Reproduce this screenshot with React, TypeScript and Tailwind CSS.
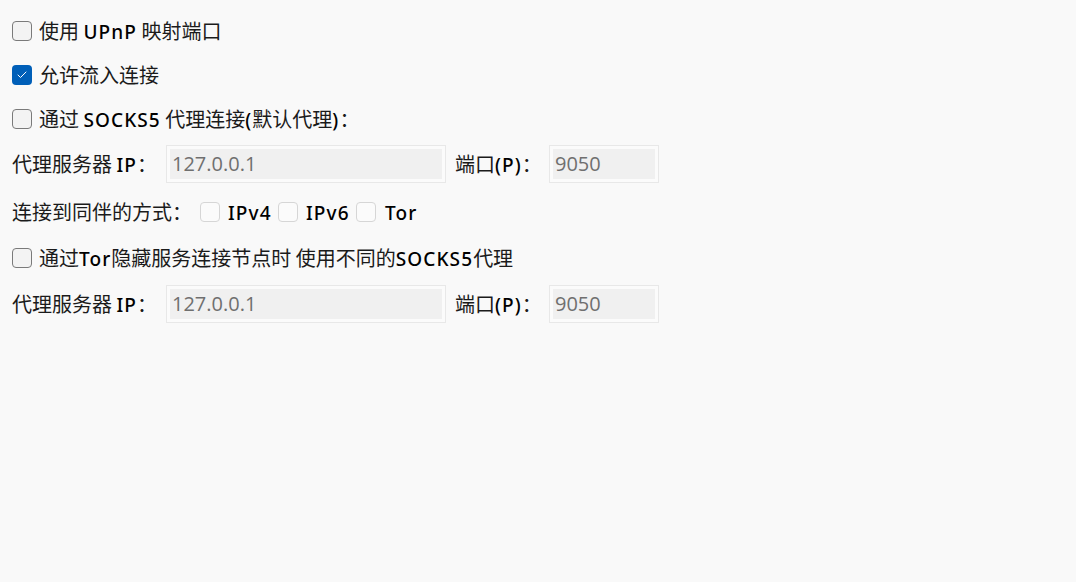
import { Check } from 'lucide-react';

const font = { fontFamily: '"Noto Sans CJK SC", sans-serif' };

// Latin words in the dialog use a wider, darker face than the CJK text
function L({ children }: { children: React.ReactNode }) {
  return (
    <span
      className="text-black text-[19px] font-medium tracking-[1.1px]"
      style={{ fontFamily: '"Noto Sans", sans-serif' }}
    >
      {children}
    </span>
  );
}

function Box({ checked = false, disabled = false }: { checked?: boolean; disabled?: boolean }) {
  if (checked) {
    return (
      <div className="w-5 h-5 rounded-[4px] bg-[#005fb8] flex items-center justify-center shrink-0">
        <Check className="w-3 h-3 text-white" strokeWidth={2} />
      </div>
    );
  }
  return (
    <div
      className={`w-5 h-5 rounded-[4px] shrink-0 ${
        disabled ? 'border border-[#d6d6d6] bg-[#fbfbfb]' : 'border border-[#7a7a7a] bg-[#f3f3f3]'
      }`}
    />
  );
}

function Field({ value, width }: { value: string; width: string }) {
  return (
    <div className={`h-[38px] ${width} border border-[#e8e8e8] bg-[#fbfbfb] p-[3px] shrink-0`}>
      <div
        className="h-full w-full bg-[#f0f0f0] flex items-center pl-[2px] text-[20px] text-[#6f6f6f]"
        style={{ fontFamily: '"Open Sans", sans-serif' }}
      >
        {value}
      </div>
    </div>
  );
}

function ProxyRow() {
  return (
    <div className="flex items-center">
      <span className="w-[154px]">
        代理服务器 <L>IP</L>：
      </span>
      <Field value="127.0.0.1" width="w-[280px]" />
      <span className="ml-[9px] w-[94px]">
        端口<L>(P)</L>：
      </span>
      <Field value="9050" width="w-[110px]" />
    </div>
  );
}

export default function App() {
  return (
    <div
      className="w-[1076px] h-[582px] bg-[#f9f9f9] text-[#1b1b1b] text-[20px] pl-3 pt-[9px]"
      style={font}
    >
      <div className="h-[44px] flex items-center gap-[7px]">
        <Box />
        <span>
          使用 <L>UPnP</L> 映射端口
        </span>
      </div>
      <div className="h-[44px] flex items-center gap-[7px]">
        <Box checked />
        <span>允许流入连接</span>
      </div>
      <div className="h-[44px] flex items-center gap-[7px]">
        <Box />
        <span>
          通过 <L>SOCKS5</L> 代理连接<L>(</L>默认代理<L>)</L>：
        </span>
      </div>
      <div className="h-[46px] flex items-center">
        <ProxyRow />
      </div>
      <div className="h-[50px] flex items-center">
        <span className="w-[188px]">连接到同伴的方式：</span>
        <Box disabled />
        <span className="ml-2 w-[50px]">
          <L>IPv4</L>
        </span>
        <Box disabled />
        <span className="ml-2 w-[50px]">
          <L>IPv6</L>
        </span>
        <Box disabled />
        <span className="ml-[9px]">
          <L>Tor</L>
        </span>
      </div>
      <div className="h-[42px] flex items-center gap-[7px]">
        <Box />
        <span>
          通过<L>Tor</L>隐藏服务连接节点时 使用不同的<L>SOCKS5</L>代理
        </span>
      </div>
      <div className="h-[50px] flex items-center">
        <ProxyRow />
      </div>
    </div>
  );
}
